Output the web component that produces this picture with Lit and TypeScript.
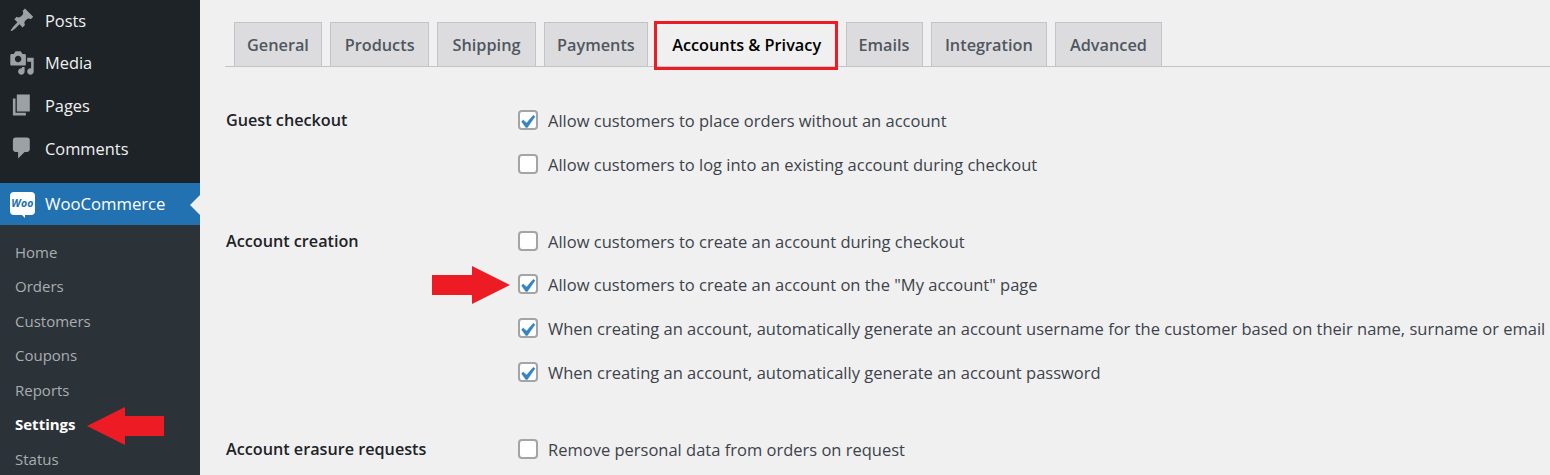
import { LitElement, html, css, svg, unsafeCSS } from "lit";
import { customElement } from "lit/decorators.js";

const FONT = `"Open Sans", "Noto Sans", sans-serif`;

const icons: Record<string, string> = {
  Posts: "M10.44 3.02l1.82-1.82 6.36 6.35-1.83 1.82c-1.05-.68-2.48-.57-3.41.36l-.75.75c-.92.93-1.04 2.35-.35 3.41l-1.83 1.82-2.41-2.41-2.8 2.79c-.42.42-3.38 2.71-3.8 2.29s1.86-3.39 2.28-3.81l2.79-2.79L4.1 9.36l1.83-1.82c1.05.69 2.48.57 3.4-.36l.75-.75c.93-.92 1.05-2.35.36-3.41z",
  Media: "M13 11V4c0-.55-.45-1-1-1h-1.67L9 1H5L3.67 3H2c-.55 0-1 .45-1 1v7c0 .55.45 1 1 1h10c.55 0 1-.45 1-1zM7 4.5c1.38 0 2.5 1.12 2.5 2.5S8.38 9.5 7 9.5 4.5 8.38 4.5 7 5.62 4.5 7 4.5zM14 6h5v10.5c0 1.38-1.12 2.5-2.5 2.5S14 17.88 14 16.5s1.12-2.5 2.5-2.5c.17 0 .34.02.5.05V9h-3V6zm-4 8.05V13h2v3.5c0 1.38-1.12 2.5-2.5 2.5S7 17.88 7 16.5 8.12 14 9.5 14c.17 0 .34.02.5.05z",
  Pages: "M6 15V2h10v13H6zm-1 1h8v2H3V5h2v11z",
  Comments: "M5 2h9c1.1 0 2 .9 2 2v7c0 1.1-.9 2-2 2h-2l-5 5v-5H5c-1.1 0-2-.9-2-2V4c0-1.1.9-2 2-2z",
};

const subs = ["Home", "Orders", "Customers", "Coupons", "Reports", "Settings", "Status"];
const tabs: [string, number][] = [
  ["General", 87.9],
  ["Products", 98.7],
  ["Shipping", 98.3],
  ["Payments", 103.7],
  ["Accounts & Privacy", 181],
  ["Emails", 77],
  ["Integration", 115.9],
  ["Advanced", 106.5],
];

const groups: { label: string; options: [string, boolean][] }[] = [
  {
    label: "Guest checkout",
    options: [
      ["Allow customers to place orders without an account", true],
      ["Allow customers to log into an existing account during checkout", false],
    ],
  },
  {
    label: "Account creation",
    options: [
      ["Allow customers to create an account during checkout", false],
      ['Allow customers to create an account on the "My account" page', true],
      ["When creating an account, automatically generate an account username for the customer based on their name, surname or email", true],
      ["When creating an account, automatically generate an account password", true],
    ],
  },
  {
    label: "Account erasure requests",
    options: [["Remove personal data from orders on request", false]],
  },
];

@customElement("app-root")
export class AppRoot extends LitElement {
  static styles = css`
    :host {
      display: flex;
      width: 1550px;
      height: 475px;
      overflow: hidden;
      position: relative;
      background: #f0f0f1;
      font-family: ${unsafeCSS(FONT)};
    }
    .sidebar {
      width: 200px;
      flex: none;
      background: #1d2327;
      display: flex;
      flex-direction: column;
      overflow: hidden;
    }
    .menu {
      height: 184px;
      margin-top: -1px;
      flex: none;
      display: flex;
      flex-direction: column;
    }
    .item {
      height: 42.6px;
      flex: none;
      display: flex;
      align-items: center;
      gap: 10px;
      padding-left: 9px;
      color: #f0f0f1;
      font-size: 16.4px;
    }
    .item svg {
      width: 26px;
      height: 26px;
      fill: #9ca1a6;
      flex: none;
    }
    .woo {
      height: 40px;
      padding: 0 0 2px 10px;
      flex: none;
      display: flex;
      align-items: center;
      gap: 10px;
      background: #2271b1;
      color: #fff;
      font-size: 16.7px;
      position: relative;
    }
    .woo::after {
      content: "";
      position: absolute;
      right: 0;
      top: 12px;
      border: 10px solid transparent;
      border-right-color: #f0f0f1;
      border-left-width: 0;
    }
    .logo {
      width: 25px;
      height: 23px;
      background: #fff;
      border-radius: 4px;
      position: relative;
      display: flex;
      align-items: center;
      justify-content: center;
      color: #2271b1;
      font-size: 10.5px;
      font-weight: 700;
      font-style: italic;
      letter-spacing: 0.3px;
    }
    .logo::after {
      content: "";
      position: absolute;
      bottom: -3px;
      left: 12px;
      border-top: 3px solid #fff;
      border-left: 3px solid transparent;
    }
    .subs {
      flex: 1;
      min-height: 0;
      background: #2c3338;
      display: flex;
      flex-direction: column;
      padding-top: 9.5px;
    }
    .sub {
      height: 34.5px;
      flex: none;
      display: flex;
      align-items: center;
      padding-left: 15px;
      color: #a9adb1;
      font-size: 15px;
    }
    .sub.current {
      color: #fff;
      font-weight: 700;
    }
    .main {
      flex: 1;
      min-width: 0;
      padding: 22px 0 0 25px;
      white-space: nowrap;
    }
    .nav {
      display: flex;
      gap: 8.4px;
      padding-left: 9px;
      height: 44px;
      border-bottom: 1px solid #c3c4c7;
    }
    .tab {
      height: 44px;
      box-sizing: border-box;
      display: flex;
      align-items: center;
      justify-content: center;
      background: #dcdcde;
      border: 1px solid #c3c4c7;
      border-bottom: none;
      color: #50575e;
      font-size: 16.3px;
      font-weight: 600;
      position: relative;
    }
    .tab.active {
      background: #f0f0f1;
      color: #000;
      border-color: transparent;
    }
    .tab.active::after {
      content: "";
      position: absolute;
      left: -3px;
      right: -2px;
      top: -2px;
      bottom: -4px;
      border: 3px solid #ed1c24;
    }
    .form {
      padding-top: 31px;
      display: flex;
      flex-direction: column;
      gap: 33.3px;
    }
    .group {
      display: grid;
      grid-template-columns: 293px 1fr;
    }
    .label {
      color: #1d2327;
      font-size: 16.2px;
      font-weight: 600;
      height: 43.7px;
      display: flex;
      align-items: center;
      padding-left: 1px;
    }
    .opt {
      height: 43.7px;
      display: flex;
      align-items: center;
      gap: 10px;
      color: #3c434a;
      font-size: 16.5px;
    }
    .opt-text {
      position: relative;
      top: 0.5px;
    }
    .box {
      width: 20px;
      height: 20px;
      box-sizing: border-box;
      border: 2px solid #a2a4a8;
      border-radius: 4px;
      background: #fff;
      flex: none;
      display: flex;
    }
    .box svg {
      width: 26px;
      height: 26px;
      flex: none;
      margin: -3px 0 0 -6px;
      fill: #3582c4;
      stroke: #3582c4;
      stroke-width: 0.3;
    }
    .arrow {
      position: absolute;
      left: 0;
      top: 0;
      width: 1550px;
      height: 475px;
      pointer-events: none;
      fill: #ed1c24;
    }
  `;

  render() {
    return html`
      <aside class="sidebar">
        <div class="menu">
          ${Object.entries(icons).map(
            ([name, d]) => html`<div class="item">
              <svg viewBox="0 0 20 20"><path d=${d}></path></svg>${name}
            </div>`
          )}
        </div>
        <div class="woo"><span class="logo">Woo</span>WooCommerce</div>
        <div class="subs">
          ${subs.map((s) => html`<div class="sub ${s === "Settings" ? "current" : ""}">${s}</div>`)}
        </div>
      </aside>
      <main class="main">
        <nav class="nav">
          ${tabs.map(
            ([t, w]) => html`<div class="tab ${t.startsWith("Accounts") ? "active" : ""}" style="width:${w}px">${t}</div>`
          )}
        </nav>
        <div class="form">
          ${groups.map(
            (g) => html`<section class="group">
              <div class="label">${g.label}</div>
              <div>
                ${g.options.map(
                  ([text, on]) => html`<label class="opt">
                    <span class="box">
                      ${on
                        ? html`<svg viewBox="0 0 20 20"><path d="M14.83 4.89l1.34.94-5.81 8.38H9.02L5.78 9.67l1.34-1.25 2.57 2.4z"></path></svg>`
                        : ""}
                    </span><span class="opt-text">${text}</span>
                  </label>`
                )}
              </div>
            </section>`
          )}
        </div>
      </main>
      <svg class="arrow" viewBox="0 0 1550 475">
        ${svg`<polygon points="87,426 125,407 125,416 164,416 164,436 125,436 125,445"></polygon>
        <polygon points="510,285 472,266 472,275 432,275 432,295 472,295 472,304"></polygon>`}
      </svg>
    `;
  }
}
